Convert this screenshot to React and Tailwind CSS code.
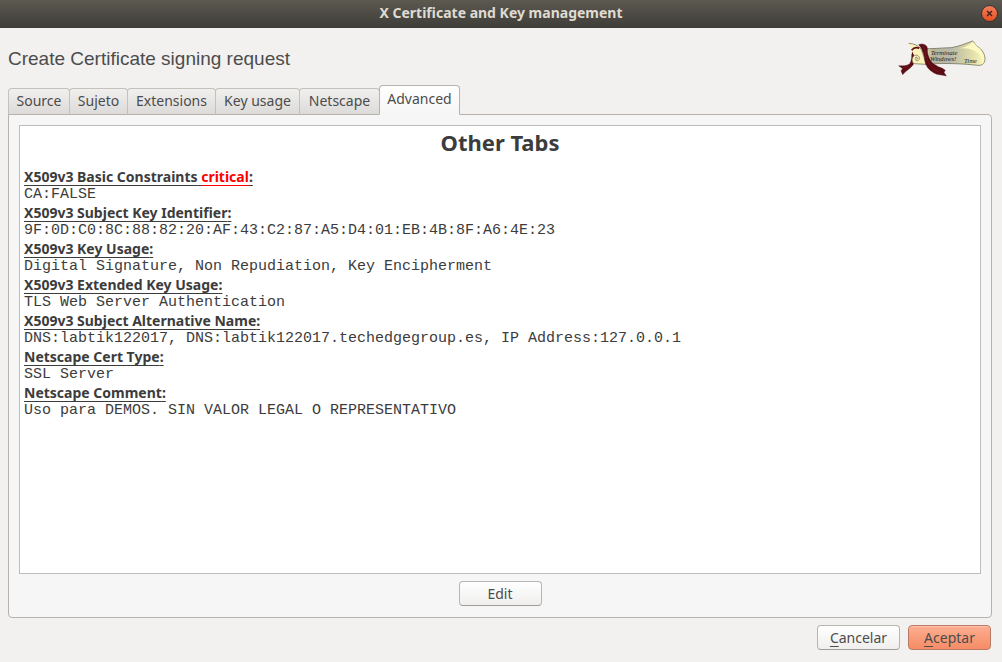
import { useState } from "react";

const tabs = [
  { name: "Source", width: "w-[62px]" },
  { name: "Sujeto", width: "w-[59px]" },
  { name: "Extensions", width: "w-[89px]" },
  { name: "Key usage", width: "w-[85px]" },
  { name: "Netscape", width: "w-[81px]" },
  { name: "Advanced", width: "w-[81px]" },
];

const entries = [
  { label: "X509v3 Basic Constraints", critical: true, value: "CA:FALSE" },
  { label: "X509v3 Subject Key Identifier", value: "9F:0D:C0:8C:88:82:20:AF:43:C2:87:A5:D4:01:EB:4B:8F:A6:4E:23" },
  { label: "X509v3 Key Usage", value: "Digital Signature, Non Repudiation, Key Encipherment" },
  { label: "X509v3 Extended Key Usage", value: "TLS Web Server Authentication" },
  { label: "X509v3 Subject Alternative Name", value: "DNS:labtik122017, DNS:labtik122017.techedgegroup.es, IP Address:127.0.0.1" },
  { label: "Netscape Cert Type", value: "SSL Server" },
  { label: "Netscape Comment", value: "Uso para DEMOS. SIN VALOR LEGAL O REPRESENTATIVO" },
];

function ScrollLogo() {
  return (
    <svg width="88" height="39" viewBox="24 30 264 117" aria-hidden="true">
      <defs>
        <linearGradient id="paper" x1="0" x2="1" y1="0" y2="0">
          <stop offset="0" stopColor="#f3edb0" />
          <stop offset="0.18" stopColor="#b5b49c" />
          <stop offset="0.45" stopColor="#b9b9ac" />
          <stop offset="0.68" stopColor="#d3d0a4" />
          <stop offset="1" stopColor="#fdf8bb" />
        </linearGradient>
      </defs>
      <path d="M96 58 C125 61 155 56 184 56 C208 52 228 43 248 36 C253 39 255 48 262 52 C275 60 286 76 285 92 C283 105 276 110 262 109 C225 104 160 102 122 105 L106 105 Z" fill="url(#paper)" stroke="#5c5a46" strokeWidth="2" />
      <path d="M248 39 C240 49 225 55 208 58 C232 56 250 60 264 72 C274 80 279 96 277 105 C286 96 284 77 270 60 C258 50 255 43 248 39 Z" fill="#fff9c2" />
      <path d="M78 57 C70 62 64 72 65 86 C63 96 62 102 57 106 C48 111 38 111 26 110 L38 119 L33 125 L38 137 C47 126 61 119 69 108 L73 100 C65 92 72 72 82 64 Z" fill="#5e0c14" stroke="#32070c" strokeWidth="1" />
      <path d="M56 43 C72 44 85 49 93 60 C101 76 103 92 108 106 L72 104 C64 98 65 85 73 80 C83 75 91 84 87 92 C83 98 74 95 76 88" fill="#fbf2bc" stroke="#655e46" strokeWidth="2" />
      <path d="M65 64 C70 57 79 54 88 58" fill="none" stroke="#5e0c14" strokeWidth="5" />
      <path d="M76 86 C82 82 84 89 80 91" fill="none" stroke="#37352b" strokeWidth="2" />
      <path d="M86 47 C95 43 106 45 111 53 C114 62 110 70 115 80 C119 93 126 104 138 109 C147 116 158 116 166 124 L162 130 L169 141 C155 137 143 139 132 132 C118 124 108 113 106 100 C103 83 102 64 86 47 Z" fill="#5e0c14" stroke="#32070c" strokeWidth="1" />
      <path d="M95 49 C107 53 103 69 108 82 C114 103 125 119 145 127 M39 116 C50 116 61 106 65 98" fill="none" stroke="#84202a" strokeWidth="1.5" />
      <g fill="#22221d" fontFamily="Liberation Serif, serif" fontStyle="italic">
        <text x="122" y="79" fontSize="20">Terminate</text>
        <text x="120" y="96" fontSize="20">Windows!</text>
        <text x="222" y="103" fontSize="20">Time</text>
      </g>
    </svg>
  );
}

function DialogButton({ children, primary = false }) {
  return (
    <button
      type="button"
      className={`h-[25px] w-[83px] rounded border text-[14px] leading-5 ${
        primary
          ? "border-[#b97b65] bg-linear-to-b from-[#fcae90] to-[#f58c66] shadow-[inset_0_1px_#ffc2aa]"
          : "border-[#b8b5b0] border-b-[#a09d98] bg-linear-to-b from-white to-[#f0efee]"
      }`}
    >
      {children}
    </button>
  );
}

function Mnemonic({ children }) {
  return <span className="underline decoration-1 underline-offset-3">{children}</span>;
}

export default function App() {
  const [active, setActive] = useState("Advanced");

  return (
    <div className="flex min-h-screen flex-col bg-[#f2f1f0] font-['Noto_Sans',sans-serif] text-[#4c4c4c]">
      <header className="grid h-7 grid-cols-[1fr_auto_1fr] items-center bg-linear-to-b from-[#5c5950] to-[#3e3d38] px-1">
        <h1 className="col-start-2 pb-[2px] text-[14px] leading-5 font-bold text-[#dfdbd2]">X Certificate and Key management</h1>
        <button
          type="button"
          aria-label="Close"
          className="mb-[2px] flex size-[17px] items-center justify-center justify-self-end rounded-full border border-[#34332e] bg-linear-to-b from-[#f47c5a] to-[#e5501f]"
        >
          <svg width="7" height="7" viewBox="0 0 7 7" aria-hidden="true">
            <path d="M1 1 L6 6 M6 1 L1 6" stroke="#432015" strokeWidth="1.4" />
          </svg>
        </button>
      </header>

      <main className="flex flex-1 flex-col pr-[10px] pb-3 pl-2">
        <div className="flex h-[57px] items-center justify-between pt-1 pr-[6px]">
          <h2 className="font-['Liberation_Sans',sans-serif] text-[19px] leading-6">Create Certificate signing request</h2>
          <ScrollLogo />
        </div>

        <div role="tablist" className="z-10 -mb-px flex h-[30px] items-end">
          {tabs.map(({ name, width }) => (
            <button
              key={name}
              type="button"
              role="tab"
              aria-selected={active === name}
              onClick={() => setActive(name)}
              className={`-mr-px shrink-0 rounded-t border pb-[2px] text-center text-[14px] leading-5 whitespace-nowrap last:mr-0 ${width} ${
                active === name
                  ? "z-10 h-[30px] border-[#b6b3ad] border-b-[#f6f6f6] bg-linear-to-b from-white to-[#f6f6f6]"
                  : "h-[27px] border-[#c4c1bc] border-b-[#b6b3ad] bg-linear-to-b from-[#f1f0ef] to-[#dddbd9]"
              }`}
            >
              {name}
            </button>
          ))}
        </div>

        <section role="tabpanel" className="flex flex-1 flex-col items-center gap-[7px] rounded-b rounded-tr border border-[#b6b3ad] bg-[#f6f6f6] px-[10px] pt-[10px] pb-[11px]">
          <article className="w-full flex-1 border border-[#bfbcb8] bg-white px-1 pt-[2px] text-[#3c3c3c]">
            <h3 className="text-center text-[22px] leading-7 font-bold">Other Tabs</h3>
            <dl className="pt-3">
              {entries.map(({ label, critical, value }) => (
                <div key={label}>
                  <dt className="text-[14px] leading-[18px] font-bold underline decoration-1 underline-offset-3 [text-decoration-skip-ink:none]">
                    {label}
                    {critical && (
                      <>
                        {" "}
                        <span className="text-[#ff0000] underline">critical</span>
                      </>
                    )}
                    :
                  </dt>
                  <dd className="font-['Liberation_Mono',monospace] text-[15px] leading-[18px]">{value}</dd>
                </div>
              ))}
            </dl>
          </article>
          <DialogButton>Edit</DialogButton>
        </section>

        <footer className="flex justify-end gap-2 pt-[7px] pr-px">
          <DialogButton>
            <Mnemonic>C</Mnemonic>ancelar
          </DialogButton>
          <DialogButton primary>
            <Mnemonic>A</Mnemonic>ceptar
          </DialogButton>
        </footer>
      </main>
    </div>
  );
}
